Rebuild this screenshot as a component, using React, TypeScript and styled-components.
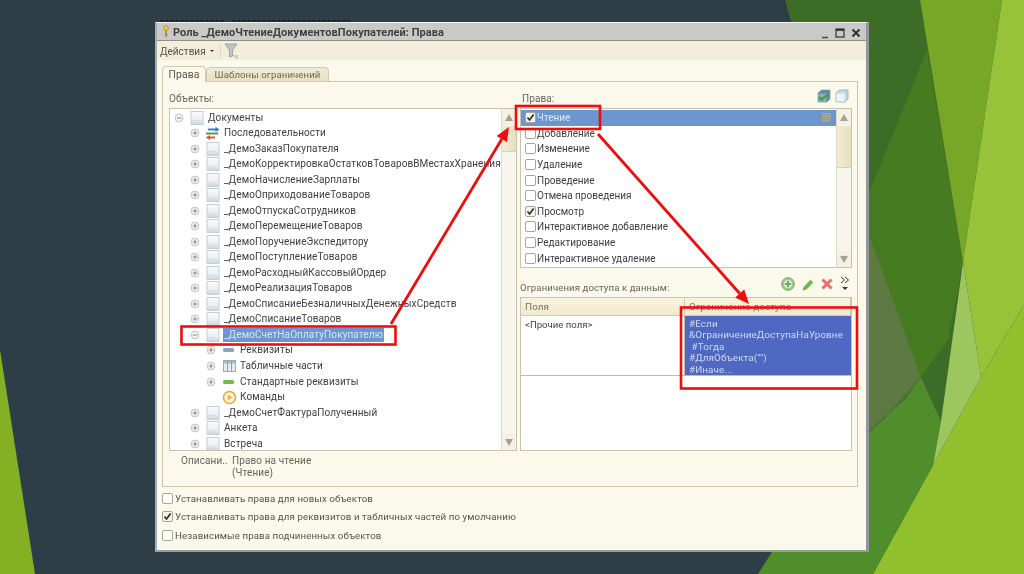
import React from "react";
import styled, { createGlobalStyle } from "styled-components";

const Global = createGlobalStyle`
  html, body { margin: 0; padding: 0; width: 1024px; height: 574px; overflow: hidden; background: #2d3e46; }
  #root { width: 1024px; height: 574px; }
`;

const Page = styled.div`
  position: relative;
  width: 1024px;
  height: 574px;
  overflow: hidden;
  padding: 22px 0 0 155px;
  box-sizing: border-box;
  background: #2d3e46;
  font-family: Roboto, "Liberation Sans", Arial, sans-serif;
`;

const Backdrop = styled.svg`
  position: absolute;
  inset: 0;
  width: 1024px;
  height: 574px;
`;

const Overlay = styled.svg`
  position: absolute;
  inset: 0;
  width: 1024px;
  height: 574px;
  pointer-events: none;
  filter: blur(0.35px);
`;

const Win = styled.div`
  position: relative;
  width: 714px;
  height: 530px;
  box-sizing: border-box;
  display: flex;
  flex-direction: column;
  background: #fbf8ec;
  border: 1px solid #f2f3ee;
  border-right: 3px solid #92979c;
  border-bottom: 2px solid #9a9d9e;
  border-left: 2px solid #a7adb0;
  filter: blur(0.45px);
  color: #3b3b3b;
  font-size: 10px;
`;

const TitleBar = styled.div`
  height: 17px;
  box-sizing: content-box;
  display: flex;
  align-items: center;
  gap: 3px;
  padding: 0 5px 0 5px;
  background: #c9c9c7;
  border-bottom: 1px solid #8f8f88;
`;

const TitleText = styled.span`
  flex: 1;
  padding-top: 2px;
  font-weight: 700;
  font-size: 11px;
  letter-spacing: 0.05px;
  color: #3f4042;
`;

const WinButtons = styled.div`
  display: flex;
  align-items: center;
  gap: 6px;
  padding-top: 2px;
`;

const Toolbar = styled.div`
  height: 19px;
  box-sizing: border-box;
  padding: 1px 0 0 3px;
  display: flex;
  align-items: center;
  background: #f2eeda;
  color: #55563f;
`;

const ToolbarLabel = styled.span`
  font-size: 10px;
`;

const Caret = styled.span`
  width: 0;
  height: 0;
  margin: 0 4px 0 4px;
  border-left: 2px solid transparent;
  border-right: 2px solid transparent;
  border-top: 2px solid #333;
`;

const ToolSep = styled.span`
  width: 1px;
  height: 14px;
  margin: 0 3px 0 2px;
  background: #ddd8c0;
`;

const Tabs = styled.div`
  display: flex;
  align-items: flex-end;
  height: 21px;
  padding: 5px 0 0 5px;
  box-sizing: border-box;
`;

const Tab = styled.div<{ $active?: boolean }>`
  height: ${(p) => (p.$active ? 16 : 15)}px;
  box-sizing: border-box;
  display: flex;
  align-items: center;
  justify-content: center;
  width: ${(p) => (p.$active ? 44 : 123)}px;
  border: 1px solid #cfcaa8;
  border-bottom: ${(p) => (p.$active ? "none" : "1px solid #cfcaa8")};
  border-radius: 4px 4px 0 0;
  background: ${(p) => (p.$active ? "#fbf8ec" : "linear-gradient(#f0ecd4, #e6e1c4)")};
  color: ${(p) => (p.$active ? "#55574f" : "#6c6a4c")};
  font-size: ${(p) => (p.$active ? 10.4 : 9.6)}px;
  letter-spacing: 0.1px;
  position: relative;
  z-index: 1;
  margin-bottom: -1px;
`;

const Panel = styled.div`
  width: 696px;
  height: 406px;
  margin-left: 5px;
  box-sizing: border-box;
  border: 1px solid #c9c5af;
  padding: 0 5px 0 6px;
  display: grid;
  grid-template-columns: 348px 332px;
  column-gap: 3px;
`;

const Column = styled.div`
  display: flex;
  flex-direction: column;
  min-width: 0;
`;

const Heading = styled.div<{ $inset?: number }>`
  height: 26px;
  display: flex;
  align-items: center;
  justify-content: space-between;
  padding: 6px 2px 0 ${(p) => p.$inset ?? 0}px;
  box-sizing: border-box;
  color: #66675a;
  font-size: 10px;
  letter-spacing: 0.1px;
`;

const CubeGroup = styled.div`
  display: flex;
  gap: 4px;
  margin-top: -5px;
  padding-right: 1px;
`;

const TreeBox = styled.div`
  height: 343px;
  box-sizing: border-box;
  display: flex;
  background: #fff;
  border: 1px solid #c8c4b0;
`;

const TreeRows = styled.div`
  flex: 1;
  padding-top: 1px;
  overflow: hidden;
  min-width: 0;
`;

const TreeRow = styled.div<{ $level: number }>`
  height: 15.52px;
  display: flex;
  align-items: center;
  padding-left: ${(p) => 4 + p.$level * 16}px;
  white-space: nowrap;
  color: #3d3d44;
  font-size: 10px;
  letter-spacing: 0.1px;
`;

const Expander = styled.span<{ $hidden?: boolean }>`
  width: 10px;
  height: 10px;
  flex: none;
  visibility: ${(p) => (p.$hidden ? "hidden" : "visible")};
  display: flex;
  margin-right: 5px;
`;

const TreeIcon = styled.span`
  width: 16px;
  height: 14px;
  flex: none;
  display: flex;
  align-items: center;
  justify-content: center;
  margin-right: 3px;
`;

const TreeLabel = styled.span<{ $selected?: boolean }>`
  padding: 0 ${(p) => (p.$selected ? "1px" : "0")};
  margin-left: ${(p) => (p.$selected ? "-1px" : "0")};
  background: ${(p) => (p.$selected ? "#6c96ce" : "transparent")};
  color: ${(p) => (p.$selected ? "#d9e4f4" : "inherit")};
  line-height: 14px;
`;

const Scroll = styled.div`
  width: 15px;
  flex: none;
  display: flex;
  flex-direction: column;
  border-left: 1px solid #dedbc8;
  background: #f8f6ec;
  box-sizing: border-box;
`;

const ScrollBtn = styled.div`
  height: 16px;
  flex: none;
  display: flex;
  align-items: center;
  justify-content: center;
  background: #f4f1e2;
`;

const Tri = styled.span<{ $down?: boolean }>`
  width: 0;
  height: 0;
  border-left: 4px solid transparent;
  border-right: 4px solid transparent;
  ${(p) => (p.$down ? "border-top: 7px solid #9ea299;" : "border-bottom: 7px solid #9ea299;")}
`;

const ScrollThumb = styled.div<{ $h: number }>`
  height: ${(p) => p.$h}px;
  flex: none;
  margin-top: 1px;
  background: linear-gradient(90deg, #f1ecd6, #e6dfbd);
  border-bottom: 1px solid #d8d2b0;
`;

const ScrollFill = styled.div`
  flex: 1;
`;

const Desc = styled.div`
  display: grid;
  grid-template-columns: 51px 1fr;
  padding: 4px 0 0 12px;
  color: #66675a;
  font-size: 10px;
  line-height: 11.5px;
  letter-spacing: 0.1px;
`;

const ListBox = styled.div`
  height: 160px;
  box-sizing: border-box;
  display: flex;
  background: #fff;
  border: 1px solid #c8c4b0;
`;

const Rights = styled.div`
  flex: 1;
  overflow: hidden;
  padding-top: 1px;
  min-width: 0;
`;

const RightRow = styled.div<{ $selected?: boolean }>`
  height: 15.6px;
  display: flex;
  align-items: center;
  padding-left: 4px;
  gap: 1px;
  background: ${(p) => (p.$selected ? "#6c96ce" : "transparent")};
  color: ${(p) => (p.$selected ? "#dce6f5" : "#3d3d44")};
  font-size: 10px;
`;

const RowGrip = styled.span`
  margin-left: auto;
  margin-right: 5px;
  display: flex;
`;

const Check = styled.span<{ $on?: boolean }>`
  width: 11px;
  height: 11px;
  flex: none;
  box-sizing: border-box;
  display: flex;
  align-items: center;
  justify-content: center;
  border: 1px solid #a6a698;
  border-radius: 2px;
  background: ${(p) => (p.$on ? "#f4f3ea" : "#fff")};
`;

const LimitsBar = styled.div`
  height: 29px;
  display: flex;
  align-items: flex-end;
  justify-content: space-between;
  padding: 0 2px 4px 0;
  box-sizing: border-box;
  color: #66675a;
  font-size: 9.6px;
  letter-spacing: 0.1px;
`;

const LimitIcons = styled.div`
  display: flex;
  align-items: center;
  gap: 7px;
  margin-bottom: 1px;
`;

const GridBox = styled.div`
  height: 154px;
  box-sizing: border-box;
  background: #fff;
  border: 1px solid #c8c4b0;
`;

const GridCols = styled.div`
  display: grid;
  grid-template-columns: 164px 1fr;
`;

const GridHead = styled.div`
  height: 17px;
  display: flex;
  align-items: center;
  padding-left: 4px;
  background: linear-gradient(#f8f3dc, #f1ead0);
  border-bottom: 1px solid #cfcab0;
  border-right: 1px solid #cfcab0;
  color: #77765a;
  font-size: 9.9px;
  letter-spacing: 0.1px;
`;

const GridCell = styled.div`
  height: 60px;
  box-sizing: border-box;
  padding: 3px 0 0 4px;
  border-bottom: 1px solid #bdbcae;
  border-right: 1px solid #bdbcae;
  color: #45454a;
  font-size: 9.6px;
`;

const BlueCell = styled.div`
  height: 60px;
  box-sizing: border-box;
  padding: 2px 0 0 4px;
  background: #4f69c2;
  border-bottom: 1px solid #bdbcae;
  color: #ccd6f1;
  font-size: 9.9px;
  line-height: 11.4px;
  letter-spacing: 0.1px;
  white-space: pre;
`;

const Options = styled.div`
  display: flex;
  flex-direction: column;
  padding: 2px 0 0 5px;
`;

const OptionRow = styled.div`
  height: 18.6px;
  display: flex;
  align-items: center;
  gap: 2px;
  color: #55564c;
  font-size: 9.7px;
  letter-spacing: 0.1px;
`;

const CheckMark = () => (
  <svg width="9" height="9" viewBox="0 0 9 9">
    <path d="M1.5 4.5 L3.6 7 L7.6 1.6" fill="none" stroke="#2c2c2c" strokeWidth="1.7" />
  </svg>
);

const PlusMinus = ({ plus }: { plus: boolean }) => (
  <svg width="10" height="10" viewBox="0 0 10 10">
    <circle cx="5" cy="5" r="3.9" fill="#f3f3f0" stroke="#c4c4bc" />
    <path d={plus ? "M2.8 5H7.2M5 2.8V7.2" : "M2.8 5H7.2"} stroke="#8a8a84" strokeWidth="1" />
  </svg>
);

const DocIcon = () => (
  <svg width="14" height="14" viewBox="0 0 14 14">
    <defs>
      <linearGradient id="docg" x1="0" y1="0" x2="0" y2="1">
        <stop offset="0" stopColor="#fafbfc" />
        <stop offset="0.65" stopColor="#e9eef2" />
        <stop offset="1" stopColor="#c9d5df" />
      </linearGradient>
    </defs>
    <rect x="1" y="0.5" width="12" height="13" fill="url(#docg)" stroke="#c3ced6" />
    <path d="M3.5 9.5H10.5M3.5 11.5H10.5" stroke="#d4dce3" />
  </svg>
);

const SeqIcon = () => (
  <svg width="16" height="15" viewBox="0 0 16 15">
    <path d="M3 3.5H11" stroke="#3a7fc4" strokeWidth="2" />
    <path d="M10.5 0.8L14.5 3.5L10.5 6Z" fill="#3a7fc4" />
    <path d="M1 7.5H13" stroke="#4da33c" strokeWidth="2" />
    <path d="M2 11.5H10" stroke="#e2533a" strokeWidth="2" />
    <path d="M5 9L1 11.5L5 14Z" fill="#e2533a" />
  </svg>
);

const AttrIcon = ({ color }: { color: string }) => (
  <svg width="14" height="8" viewBox="0 0 14 8">
    <rect x="1" y="2" width="11" height="4" rx="1.5" fill={color} />
  </svg>
);

const TableIcon = () => (
  <svg width="15" height="14" viewBox="0 0 15 14">
    <rect x="1.5" y="1.5" width="12" height="11" fill="#e3eaf0" stroke="#9cabb8" />
    <rect x="2" y="2" width="11" height="2.5" fill="#a9bbcb" />
    <path d="M5.5 2V12M9.5 2V12" stroke="#8da1b3" />
  </svg>
);

const CmdIcon = () => (
  <svg width="15" height="15" viewBox="0 0 15 15">
    <circle cx="7.5" cy="7.5" r="6" fill="#fff5d8" stroke="#e2a93d" strokeWidth="1.6" />
    <path d="M5.6 4.4L10.8 7.5L5.6 10.6Z" fill="#eab54a" />
  </svg>
);

const KeyIcon = () => (
  <svg width="8" height="13" viewBox="0 0 8 13">
    <circle cx="4" cy="3" r="2.6" fill="#e8c23c" stroke="#b69320" strokeWidth="0.6" />
    <path d="M4 5V12" stroke="#a98a3a" strokeWidth="1.6" />
    <path d="M4 9.5H6" stroke="#a98a3a" />
  </svg>
);

const FunnelIcon = () => (
  <svg width="16" height="16" viewBox="0 0 16 16">
    <path d="M1 1H13L8.5 7V13L5.5 14V7Z" fill="#c2c5c4" stroke="#8f9495" strokeWidth="0.8" />
    <path d="M9 13H14M11 15H14" stroke="#aeb1ac" />
  </svg>
);

const Cube = ({ checked }: { checked?: boolean }) => (
  <svg width="14" height="14" viewBox="0 0 14 14">
    <path d="M1 4L4.5 1H13V10L10 13H1Z" fill={checked ? "#5f8ba3" : "#c3d9e6"} stroke="#86a3b3" strokeWidth="0.7" />
    <rect x="1.5" y="4.5" width="8" height="8" fill={checked ? "#8fb0c0" : "#eef5f9"} />
    {checked && <path d="M2 8L4.5 10.5L11 5.5" fill="none" stroke="#45a52e" strokeWidth="2.4" />}
  </svg>
);

const GripIcon = () => (
  <svg width="9" height="9" viewBox="0 0 9 9">
    <path d="M0.5 0.5H3.5V3.5H0.5ZM5 0.5H8V3.5H5ZM0.5 5H3.5V8H0.5ZM5 5H8V8H5Z" fill="none" stroke="#c7ae62" />
  </svg>
);

const AddIcon = () => (
  <svg width="14" height="14" viewBox="0 0 14 14">
    <circle cx="7" cy="7" r="6.4" fill="#9bc48e" stroke="#87ad7f" />
    <circle cx="7" cy="7" r="4.2" fill="#dcead2" />
    <path d="M3.8 7H10.2M7 3.8V10.2" stroke="#5aa34a" strokeWidth="1.6" />
  </svg>
);

const PenIcon = () => (
  <svg width="12" height="13" viewBox="0 0 12 13">
    <path d="M2 9L8.4 2.2L10.8 4.4L4.4 11.2L1 12Z" fill="#6dbb4a" stroke="#4f9a35" strokeWidth="0.6" />
  </svg>
);

const CrossIcon = () => (
  <svg width="12" height="12" viewBox="0 0 12 12">
    <path d="M1.5 1.5L10.5 10.5M10.5 1.5L1.5 10.5" stroke="#e8706a" strokeWidth="3" />
  </svg>
);

const MoreIcon = () => (
  <svg width="10" height="16" viewBox="0 0 10 16">
    <path d="M1 1L4.5 4L1 7M5 1L8.5 4L5 7" fill="none" stroke="#333" strokeWidth="1" />
    <path d="M2 11H8L5 14Z" fill="#333" />
  </svg>
);

const WinMin = () => (
  <svg width="8" height="12" viewBox="0 0 8 12">
    <path d="M1 10.5H7" stroke="#444" strokeWidth="1.5" />
  </svg>
);
const WinMax = () => (
  <svg width="10" height="10" viewBox="0 0 10 10">
    <rect x="1" y="1" width="8" height="8" fill="none" stroke="#3a3a3a" strokeWidth="1.3" />
    <path d="M1 2H9" stroke="#3a3a3a" strokeWidth="2" />
  </svg>
);
const WinClose = () => (
  <svg width="10" height="10" viewBox="0 0 10 10">
    <path d="M1.5 1.5L8.5 8.5M8.5 1.5L1.5 8.5" stroke="#333" strokeWidth="2" />
  </svg>
);

type Row = {
  level: number;
  text: string;
  icon: React.ReactNode;
  open?: boolean;
  noExp?: boolean;
  selected?: boolean;
};

const doc = <DocIcon />;
const treeRows: Row[] = [
  { level: 0, text: "Документы", icon: doc, open: true },
  { level: 1, text: "Последовательности", icon: <SeqIcon /> },
  { level: 1, text: "_ДемоЗаказПокупателя", icon: doc },
  { level: 1, text: "_ДемоКорректировкаОстатковТоваровВМестахХранения", icon: doc },
  { level: 1, text: "_ДемоНачислениеЗарплаты", icon: doc },
  { level: 1, text: "_ДемоОприходованиеТоваров", icon: doc },
  { level: 1, text: "_ДемоОтпускаСотрудников", icon: doc },
  { level: 1, text: "_ДемоПеремещениеТоваров", icon: doc },
  { level: 1, text: "_ДемоПоручениеЭкспедитору", icon: doc },
  { level: 1, text: "_ДемоПоступлениеТоваров", icon: doc },
  { level: 1, text: "_ДемоРасходныйКассовыйОрдер", icon: doc },
  { level: 1, text: "_ДемоРеализацияТоваров", icon: doc },
  { level: 1, text: "_ДемоСписаниеБезналичныхДенежныхСредств", icon: doc },
  { level: 1, text: "_ДемоСписаниеТоваров", icon: doc },
  { level: 1, text: "_ДемоСчетНаОплатуПокупателю", icon: doc, open: true, selected: true },
  { level: 2, text: "Реквизиты", icon: <AttrIcon color="#8ba3c4" /> },
  { level: 2, text: "Табличные части", icon: <TableIcon /> },
  { level: 2, text: "Стандартные реквизиты", icon: <AttrIcon color="#6cc04a" /> },
  { level: 2, text: "Команды", icon: <CmdIcon />, noExp: true },
  { level: 1, text: "_ДемоСчетФактураПолученный", icon: doc },
  { level: 1, text: "Анкета", icon: doc },
  { level: 1, text: "Встреча", icon: doc },
];

const rights: { text: string; on?: boolean }[] = [
  { text: "Чтение", on: true },
  { text: "Добавление" },
  { text: "Изменение" },
  { text: "Удаление" },
  { text: "Проведение" },
  { text: "Отмена проведения" },
  { text: "Просмотр", on: true },
  { text: "Интерактивное добавление" },
  { text: "Редактирование" },
  { text: "Интерактивное удаление" },
  { text: "" },
];

const options = [
  { text: "Устанавливать права для новых объектов" },
  { text: "Устанавливать права для реквизитов и табличных частей по умолчанию", on: true },
  { text: "Независимые права подчиненных объектов" },
];

const ScrollBar = ({ thumb }: { thumb: number }) => (
  <Scroll>
    <ScrollBtn>
      <Tri />
    </ScrollBtn>
    <ScrollThumb $h={thumb} />
    <ScrollFill />
    <ScrollBtn>
      <Tri $down />
    </ScrollBtn>
  </Scroll>
);

const Arrow = ({ x1, y1, x2, y2 }: { x1: number; y1: number; x2: number; y2: number }) => {
  const a = Math.atan2(y2 - y1, x2 - x1);
  const len = 14;
  const w = 6;
  const bx = x2 - Math.cos(a) * len;
  const by = y2 - Math.sin(a) * len;
  const nx = -Math.sin(a) * w;
  const ny = Math.cos(a) * w;
  return (
    <g>
      <line x1={x1} y1={y1} x2={bx} y2={by} stroke="#ee0d0d" strokeWidth="2.8" />
      <polygon points={`${x2},${y2} ${bx + nx},${by + ny} ${bx - nx},${by - ny}`} fill="#ee0d0d" />
    </g>
  );
};

export default function App() {
  return (
    <Page>
      <Global />
      <Backdrop viewBox="0 0 1024 574">
        <polygon points="0,350 35,574 0,574" fill="#84b024" />
        <polygon points="785,0 920,0 963,262 941,421 921,377 860,240 840,200" fill="#3c6c25" />
        <polygon points="927,50 963,262 948,340 921,377 860,215" fill="#467b22" />
        <polygon points="920,0 1002,0 963,262" fill="#77a727" />
        <polygon points="1002,0 1024,0 1024,305 981,377 963,262" fill="#96c33a" />
        <polygon points="1024,305 981,377 933,465 873,574 1024,574" fill="#91c02e" />
        <polygon points="860,240 871,240 921,377 885,418 860,440" fill="#5c7a42" />
        <polygon points="855,445 885,418 921,377 941,421 933,465 873,574 758,574 772,552 855,552" fill="#4f8e2a" />
        <polygon points="860,437 885,418 921,377 905,400" fill="#49703a" />
        <polygon points="963,262 981,377 933,465 941,421" fill="#9cc65e" />
        <path d="M160 21H225M232 21H350" stroke="#1a1f22" strokeWidth="2" strokeDasharray="4 1" opacity="0.7" />
      </Backdrop>
      <Win>
        <TitleBar>
          <KeyIcon />
          <TitleText>Роль _ДемоЧтениеДокументовПокупателей: Права</TitleText>
          <WinButtons>
            <WinMin />
            <WinMax />
            <WinClose />
          </WinButtons>
        </TitleBar>
        <Toolbar>
          <ToolbarLabel>Действия</ToolbarLabel>
          <Caret />
          <ToolSep />
          <FunnelIcon />
        </Toolbar>
        <Tabs>
          <Tab $active>Права</Tab>
          <Tab>Шаблоны ограничений</Tab>
        </Tabs>
        <Panel>
          <Column>
            <Heading>Объекты:</Heading>
            <TreeBox>
              <TreeRows>
                {treeRows.map((r) => (
                  <TreeRow key={r.text} $level={r.level}>
                    <Expander $hidden={r.noExp}>
                      <PlusMinus plus={!r.open} />
                    </Expander>
                    <TreeIcon>{r.icon}</TreeIcon>
                    <TreeLabel $selected={r.selected}>{r.text}</TreeLabel>
                  </TreeRow>
                ))}
              </TreeRows>
              <ScrollBar thumb={25} />
            </TreeBox>
            <Desc>
              <span>Описани..</span>
              <span>
                Право на чтение
                <br />
                (Чтение)
              </span>
            </Desc>
          </Column>
          <Column>
            <Heading $inset={2}>
              Права:
              <CubeGroup>
                <Cube checked />
                <Cube />
              </CubeGroup>
            </Heading>
            <ListBox>
              <Rights>
                {rights.map((r, i) => (
                  <RightRow key={i} $selected={i === 0}>
                    <Check $on={r.on}>{r.on && <CheckMark />}</Check>
                    {r.text}
                    {i === 0 && (
                      <RowGrip>
                        <GripIcon />
                      </RowGrip>
                    )}
                  </RightRow>
                ))}
              </Rights>
              <ScrollBar thumb={41} />
            </ListBox>
            <LimitsBar>
              Ограничения доступа к данным:
              <LimitIcons>
                <AddIcon />
                <PenIcon />
                <CrossIcon />
                <MoreIcon />
              </LimitIcons>
            </LimitsBar>
            <GridBox>
              <GridCols>
                <GridHead>Поля</GridHead>
                <GridHead>Ограничение доступа</GridHead>
                <GridCell>&lt;Прочие поля&gt;</GridCell>
                <BlueCell>{"#Если\n&ОграничениеДоступаНаУровне\n #Тогда\n#ДляОбъекта(\"\")\n#Иначе..."}</BlueCell>
              </GridCols>
            </GridBox>
          </Column>
        </Panel>
        <Options>
          {options.map((o) => (
            <OptionRow key={o.text}>
              <Check $on={o.on}>{o.on && <CheckMark />}</Check>
              {o.text}
            </OptionRow>
          ))}
        </Options>
      </Win>
      <Overlay viewBox="0 0 1024 574">
        <rect x="516" y="106" width="84" height="23" fill="none" stroke="#ee0d0d" strokeWidth="2.6" />
        <rect x="181.5" y="326.5" width="214" height="18" fill="none" stroke="#ee0d0d" strokeWidth="2.6" />
        <rect x="681" y="307.5" width="176" height="81" fill="none" stroke="#ee0d0d" strokeWidth="2.6" />
        <Arrow x1={391} y1={324} x2={509} y2={127} />
        <Arrow x1={598} y1={134} x2={749} y2={304} />
      </Overlay>
    </Page>
  );
}
